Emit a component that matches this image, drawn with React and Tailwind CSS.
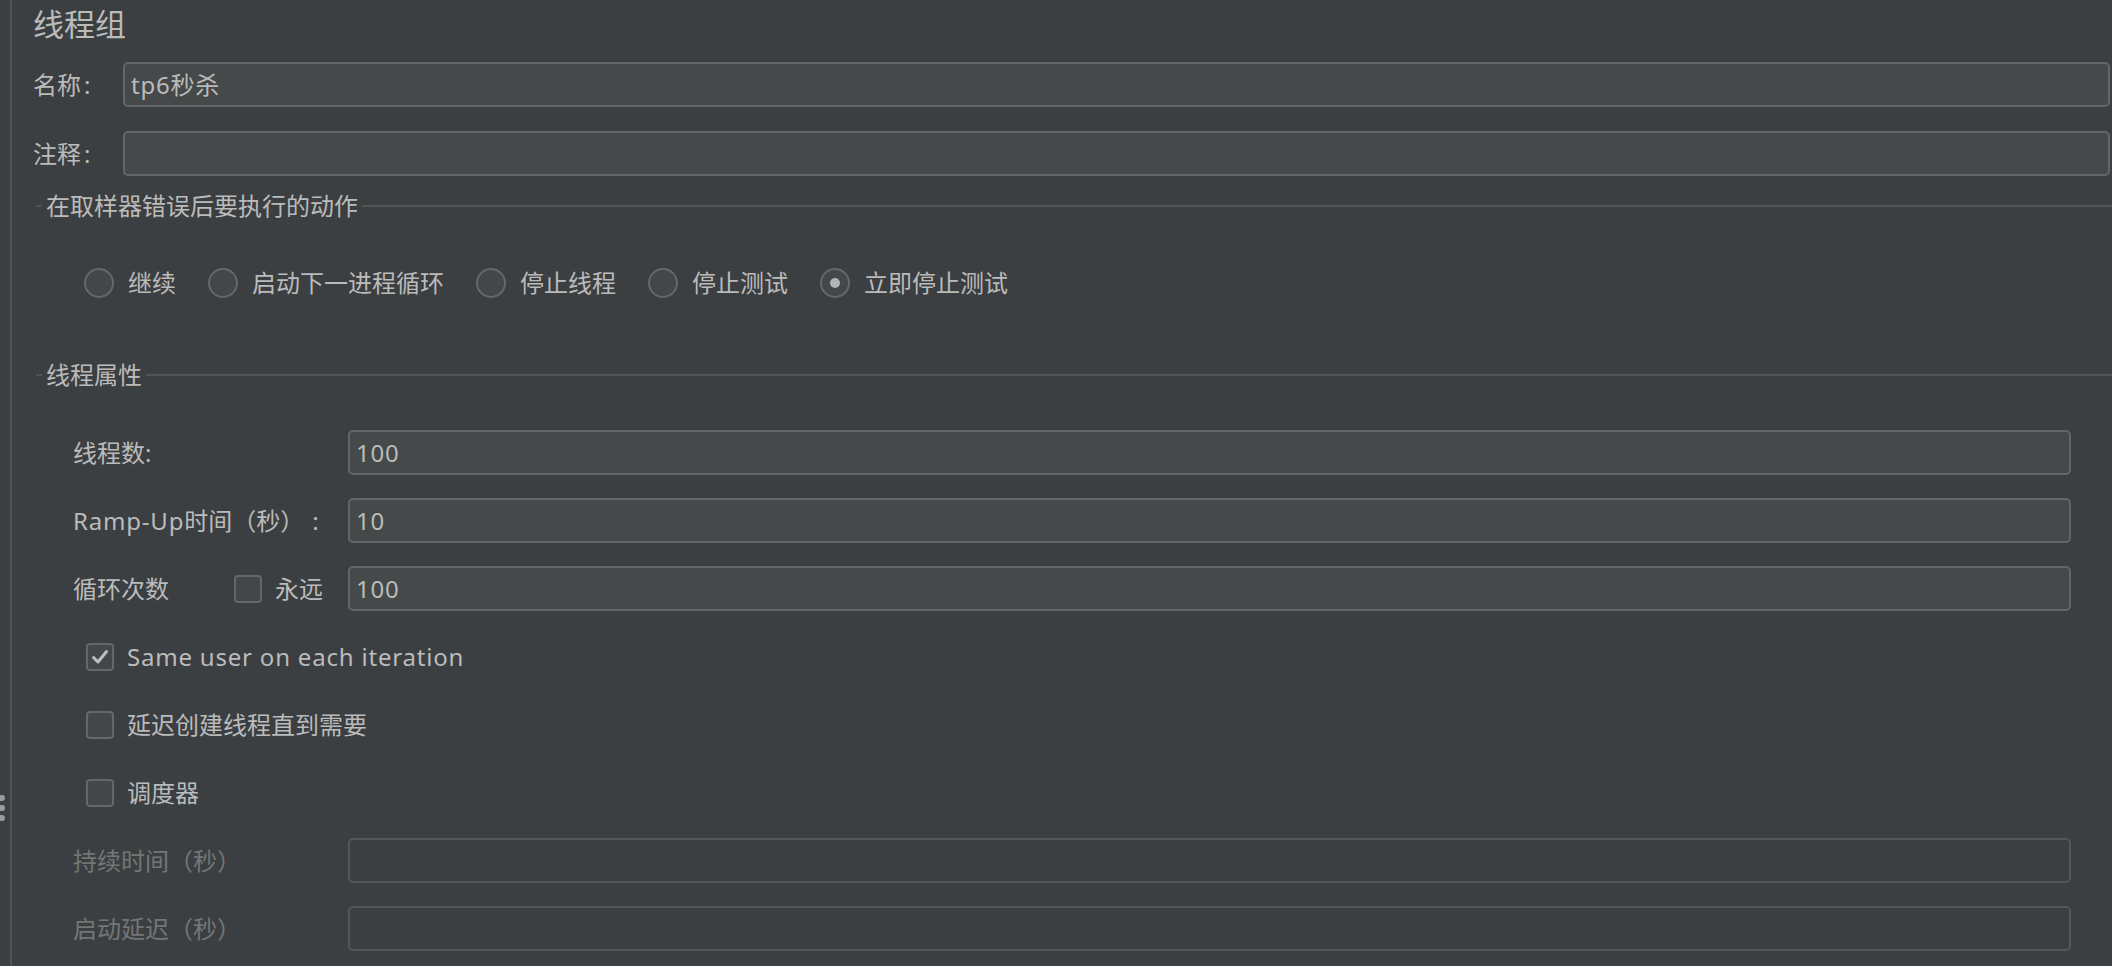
import React from "react";

const font = {
  fontFamily: '"Noto Sans", "Noto Sans CJK SC", sans-serif',
};

const Radio = ({ checked, label }) => (
  <label className="flex items-center gap-[14px]">
    <span className="w-[30px] h-[30px] rounded-full border-2 border-[#666868] bg-[#43474a] flex items-center justify-center">
      {checked && <span className="w-[10px] h-[10px] rounded-full bg-[#b4b4b4]" />}
    </span>
    <span>{label}</span>
  </label>
);

const Checkbox = ({ checked }) => (
  <span className="w-[28px] h-[28px] shrink-0 rounded-[4px] border-2 border-[#666868] bg-[#43474a] flex items-center justify-center">
    {checked && (
      <svg width="20" height="20" viewBox="0 0 20 20" fill="none">
        <path
          d="M3.5 10.5 L8 15 L16.5 4.5"
          stroke="#bdbdbd"
          strokeWidth="3"
          strokeLinecap="round"
          strokeLinejoin="round"
        />
      </svg>
    )}
  </span>
);

const Input = ({ value, disabled }) => (
  <div
    className={
      disabled
        ? "flex-1 h-[45px] rounded-[5px] border-2 border-[#545658] bg-[#3c3f41]"
        : "flex-1 h-[45px] rounded-[5px] border-2 border-[#646566] bg-[#45494a] flex items-center pl-[6px] text-[#bbbbbb] tracking-[0.8px]"
    }
  >
    {value}
  </div>
);

const SectionTitle = ({ title }) => (
  <div className="flex items-center h-[30px]">
    <div className="ml-[3px] w-[6px] h-[2px] bg-[#515456]" />
    <span className="px-[4px] text-[#bbbbbb]">{title}</span>
    <div className="flex-1 h-[2px] bg-[#515456]" />
  </div>
);

const Row = ({ label, children, disabled }) => (
  <div className="flex items-center h-[45px]">
    <div
      className={
        "w-[275px] shrink-0 flex items-center " +
        (disabled ? "text-[#747676]" : "text-[#bbbbbb]")
      }
    >
      {label}
    </div>
    {children}
  </div>
);

const CheckRow = ({ checked, label, latin }) => (
  <div className="flex items-center h-[45px] pl-[13px] gap-[13px]">
    <Checkbox checked={checked} />
    <span className={latin ? "tracking-[0.8px]" : ""}>{label}</span>
  </div>
);

export default function App() {
  return (
    <div
      className="flex w-full h-[966px] bg-[#3c3f41] text-[#bbbbbb] text-[24px] overflow-hidden"
      style={font}
    >
      <div className="w-[12px] shrink-0 border-r-2 border-[#515456] flex flex-col gap-[4px] pt-[795px]">
        <span className="w-[5px] h-[6px] rounded-r-full bg-[#9a9a9a]" />
        <span className="w-[5px] h-[6px] rounded-r-full bg-[#9a9a9a]" />
        <span className="w-[5px] h-[6px] rounded-r-full bg-[#9a9a9a]" />
      </div>

      <div className="flex-1 pl-[21px] flex flex-col">
        <div className="text-[31px] leading-[48px]">线程组</div>

        <div className="flex items-center mt-[14px] mr-[2px]">
          <div className="w-[90px] shrink-0">
            名称<span className="ml-[3px]">:</span>
          </div>
          <Input value="tp6秒杀" />
        </div>
        <div className="flex items-center mt-[24px] mr-[2px]">
          <div className="w-[90px] shrink-0">
            注释<span className="ml-[3px]">:</span>
          </div>
          <Input value="" />
        </div>

        <div className="mt-[15px]">
          <SectionTitle title="在取样器错误后要执行的动作" />
        </div>

        <div className="flex items-center gap-[32px] pl-[51px] mt-[47px] h-[30px]">
          <Radio label="继续" />
          <Radio label="启动下一进程循环" />
          <Radio label="停止线程" />
          <Radio label="停止测试" />
          <Radio label="立即停止测试" checked />
        </div>

        <div className="mt-[62px]">
          <SectionTitle title="线程属性" />
        </div>

        <div className="flex flex-col gap-[23px] pl-[40px] pr-[41px] mt-[40px]">
          <Row label="线程数:">
            <Input value="100" />
          </Row>
          <Row
            label={
              <>
                <span className="tracking-[0.8px]">Ramp-Up</span>
                <span>时间（秒）</span>
                <span className="ml-[8px]">:</span>
              </>
            }
          >
            <Input value="10" />
          </Row>
          <Row
            label={
              <>
                <span className="w-[161px]">循环次数</span>
                <Checkbox />
                <span className="ml-[13px]">永远</span>
              </>
            }
          >
            <Input value="100" />
          </Row>
          <CheckRow checked latin label="Same user on each iteration" />
          <CheckRow label="延迟创建线程直到需要" />
          <CheckRow label="调度器" />
          <Row label="持续时间（秒）" disabled>
            <Input disabled />
          </Row>
          <Row label="启动延迟（秒）" disabled>
            <Input disabled />
          </Row>
        </div>
      </div>
    </div>
  );
}
